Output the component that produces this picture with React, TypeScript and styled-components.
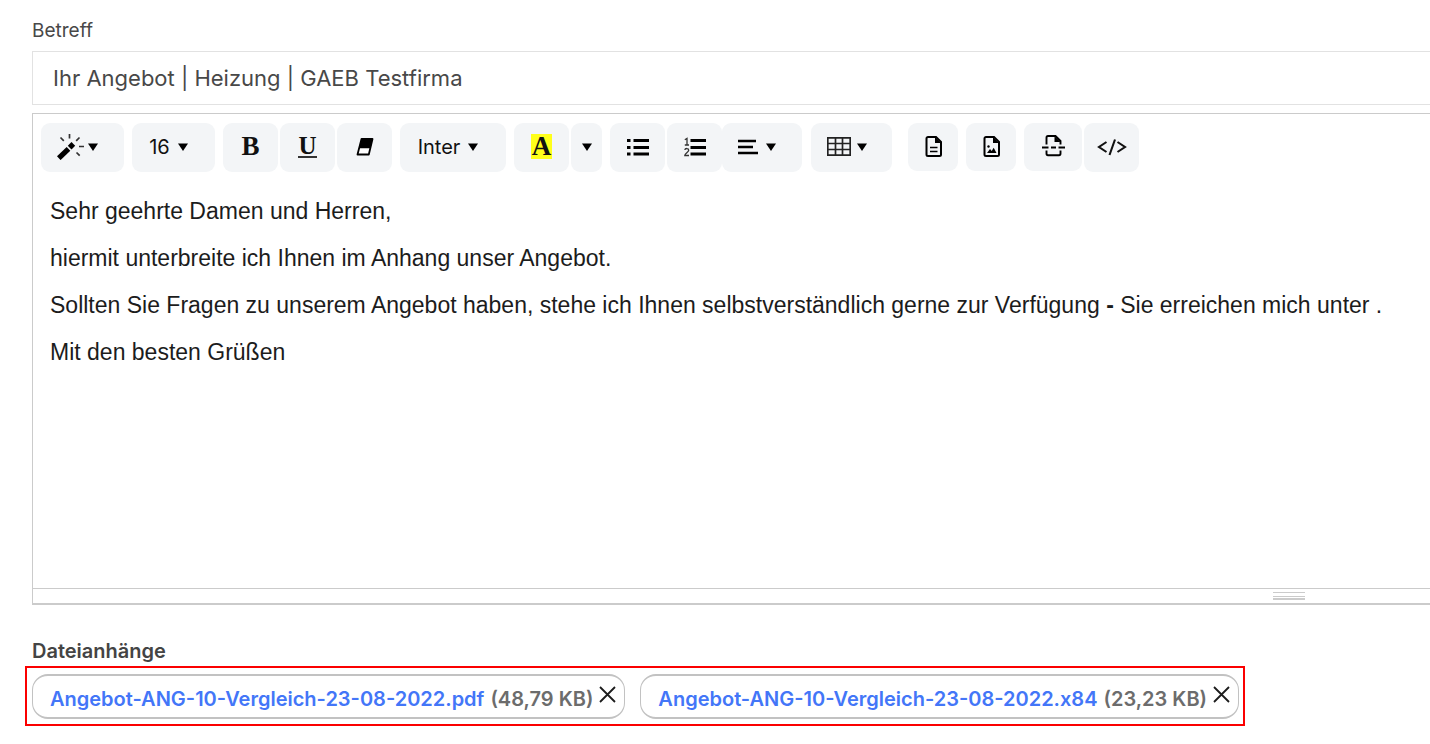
import React from 'react';
import styled, { createGlobalStyle, css } from 'styled-components';

const GlobalStyle = createGlobalStyle`
  *, *::before, *::after { box-sizing: border-box; }
  body {
    margin: 0;
    background: #fff;
    color: #484848;
    font-family: Inter, "Liberation Sans", sans-serif;
    overflow-x: hidden;
  }
`;

const Form = styled.form`
  display: flex;
  flex-direction: column;
  padding: 19px 0 18px 25px;
`;

const Field = styled.div`
  display: flex;
  flex-direction: column;
  padding-left: 7px;
`;

const SubjectLabel = styled.label`
  font-size: 19px;
  font-weight: 400;
  line-height: 24px;
  margin-bottom: 8px;
`;

const SubjectInput = styled.input`
  width: 100%;
  height: 54px;
  padding: 0 20px;
  border: 1px solid #e2e2e2;
  border-right: 0;
  border-radius: 0;
  background: #fff;
  color: #484848;
  font-family: inherit;
  font-size: 22px;
  font-weight: 400;
  outline: none;
`;

const Editor = styled.section`
  display: flex;
  flex-direction: column;
  margin: 8px 0 0 7px;
  border: 1px solid #cbcbcb;
  border-width: 1px 0 2px 1px;
`;

const Toolbar = styled.div`
  display: flex;
  flex-wrap: wrap;
  align-items: flex-start;
  gap: 8px;
  padding: 9px 8px 0;
`;

const Group = styled.div<{ $gap?: number; $before?: number }>`
  display: flex;
  gap: ${({ $gap = 2 }) => $gap}px;
  margin-left: ${({ $before = 0 }) => $before}px;
`;

const ToolButton = styled.button<{ $width?: number; $short?: boolean; $menu?: boolean; $gap?: number }>`
  display: inline-flex;
  align-items: center;
  justify-content: center;
  gap: ${({ $gap = 8 }) => $gap}px;
  width: ${({ $width = 55 }) => $width}px;
  height: ${({ $short }) => ($short ? 48 : 49)}px;
  padding: 0 ${({ $menu }) => ($menu ? 10 : 0)}px 2px 0;
  border: 0;
  border-radius: 9px;
  background: #f3f5f7;
  color: #111;
  font-family: inherit;
  font-size: 20px;
  font-weight: 400;
  line-height: 24px;
  cursor: pointer;
`;

const Glyph = styled.span<{ $underline?: boolean; $marked?: boolean }>`
  font-family: "Liberation Serif", serif;
  font-size: 27px;
  font-weight: 700;
  line-height: 25px;
  ${({ $underline }) => $underline && css`
    font-size: 25px;
    border-bottom: 2px solid #333;
    line-height: 20px;
  `}
  ${({ $marked }) => $marked && css`
    width: 21px;
    background: #ffff1a;
    text-align: center;
  `}
`;

const Body = styled.div`
  min-height: 416px;
  padding: 25px 17px 0;
  color: #1c1c1c;
  font-family: "Liberation Sans", Arial, sans-serif;
  font-size: 23px;
  line-height: 28px;
  outline: none;

  p { margin: 0 0 19px; }
`;

const StatusBar = styled.div`
  display: flex;
  justify-content: flex-end;
  height: 15px;
  padding: 3px 125px 0 0;
  border-top: 1px solid #cbcbcb;
`;

const Grip = styled.span`
  width: 32px;
  height: 8px;
  border: 1px solid #cbcbcb;
  border-width: 1px 0 2px;
  cursor: ns-resize;

  &::after {
    content: "";
    display: block;
    height: 4px;
    border-bottom: 1px solid #cbcbcb;
  }
`;

const AttachmentsTitle = styled.h2`
  margin: 33px 0 2px 7px;
  color: #444;
  font-size: 20px;
  font-weight: 600;
  line-height: 26px;
`;

const AttachmentList = styled.ul`
  display: flex;
  flex-wrap: wrap;
  align-self: flex-start;
  gap: 15px;
  margin: 0;
  padding: 6px 4px 5px 5px;
  border: 2px solid #fb0000;
  list-style: none;
`;

const Attachment = styled.li`
  display: flex;
  align-items: center;
  gap: 6px;
  height: 45px;
  padding: 4px 8px 0 17px;
  border: 1px solid #c2c2c2;
  border-width: 2px 1px;
  border-radius: 16px;
  font-size: 20px;
  font-weight: 600;
  line-height: 28px;
  white-space: nowrap;
`;

const FileLink = styled.a`
  color: #4376f8;
  text-decoration: none;
`;

const FileSize = styled.span`
  color: #6c6c6c;
`;

const RemoveButton = styled.button`
  display: flex;
  padding: 0;
  margin-bottom: 8px;
  border: 0;
  background: none;
  cursor: pointer;
`;

const Caret = () => (
  <svg width="10" height="8" viewBox="0 0 10 8" aria-hidden="true">
    <path d="M0 .5h10L5 8z" fill="#000" />
  </svg>
);

const WandIcon = () => (
  <svg width="27" height="26" viewBox="0 0 27 26" aria-hidden="true">
    <path d="M1.800 24.200 11.500 14.800" stroke="#000" strokeWidth="5.200" />
    <path d="m14.500 8 3.700 3.700-3.700 3.700-3.700-3.700z" fill="#000" />
    <path d="M12.500 0v4.500M3.500 3.500l3.300 3.300M22.500 3.500l-3.300 3.300M22 12.500h5M19.500 18.500l3.200 3.200" stroke="#333" strokeWidth="1.700" fill="none" />
  </svg>
);

const EraserIcon = () => (
  <svg width="18" height="18" viewBox="0 0 18 18" aria-hidden="true">
    <path d="M5.500 1h11l-3.700 15.500H1.500z" fill="#fff" stroke="#000" strokeWidth="1.800" strokeLinejoin="round" />
    <path d="M5.500 1h11l-2.200 9.300H3z" fill="#000" />
  </svg>
);

const BulletsIcon = () => (
  <svg width="22" height="18" viewBox="0 0 22 18" aria-hidden="true">
    <path d="M0 2.500h3.500M0 9.500h3.500M0 16h3.500" stroke="#000" strokeWidth="3.200" />
    <path d="M6.500 2.500H22M6.500 9.500H22M6.500 16H22" stroke="#000" strokeWidth="3" />
  </svg>
);

const NumbersIcon = () => (
  <svg width="22" height="20" viewBox="0 0 22 20" aria-hidden="true">
    <path d="M6.500 3.500H22M6.500 10.500H22M6.500 17H22" stroke="#000" strokeWidth="3" />
    <path d="M.8 2.800 3 1.500V8M.8 8h4.200M.8 13c.3-2 3.900-2 3.900.2C4.700 15 .8 16.500.8 18.500H5" stroke="#333" strokeWidth="1.300" fill="none" />
  </svg>
);

const AlignIcon = () => (
  <svg width="20" height="16" viewBox="0 0 20 16" aria-hidden="true">
    <path d="M0 2h18M0 8h15M0 14h20" stroke="#000" strokeWidth="2.700" />
  </svg>
);

const TableIcon = () => (
  <svg width="24" height="19" viewBox="0 0 24 19" aria-hidden="true">
    <path d="M.8.800h22.400v17.400H.8zM.8 6.500h22.400M.8 12.500h22.400M8.500 1v17M15.500 1v17" stroke="#222" strokeWidth="1.700" fill="none" />
  </svg>
);

const pageOutline = 'M3 1h8l5 5v12.500a1.500 1.500 0 0 1-1.500 1.500H3a1.500 1.500 0 0 1-1.500-1.500v-16A1.500 1.500 0 0 1 3 1z';

const PageIcon = () => (
  <svg width="17" height="21" viewBox="0 0 17 21" aria-hidden="true">
    <path d={pageOutline} fill="none" stroke="#000" strokeWidth="2" />
    <path d="M10 1v6h6z" fill="#000" />
    <path d="M5 11.500h7.500M5 15.500h7.500" stroke="#000" strokeWidth="1.600" />
  </svg>
);

const PictureIcon = () => (
  <svg width="17" height="21" viewBox="0 0 17 21" aria-hidden="true">
    <path d={pageOutline} fill="none" stroke="#000" strokeWidth="2" />
    <path d="M10 1v6h6zM4 17l3-4 1.700 2 2-3.200L13.500 17z" fill="#000" />
    <circle cx="5.500" cy="10.500" r="1.200" fill="#000" />
  </svg>
);

const PageBreakIcon = () => (
  <svg width="23" height="22" viewBox="0 0 23 22" aria-hidden="true">
    <path d="M4.500 9.500V2.700C4.500 1.700 5 1 6 1h7.500l5 5v3.500M4.500 15.500v3c0 1 .5 1.700 1.500 1.700h11c1 0 1.500-.7 1.500-1.700v-3" fill="none" stroke="#000" strokeWidth="1.900" />
    <path d="M12.500 1v6h6z" fill="#000" />
    <path d="M0 12.500h6.500M9 12.500h5M16.500 12.500H23" stroke="#000" strokeWidth="2" />
  </svg>
);

const CodeIcon = () => (
  <svg width="30" height="18" viewBox="0 0 30 18" aria-hidden="true">
    <path d="M9.500 4 2 9l7.500 5M20.500 4 28 9l-7.500 5M18 1.500l-5.500 15.500" fill="none" stroke="#111" strokeWidth="2.100" />
  </svg>
);

const CloseIcon = () => (
  <svg width="17" height="17" viewBox="0 0 17 17" aria-hidden="true">
    <path d="m1 1 15 15M16 1 1 16" stroke="#1c1c1c" strokeWidth="1.800" />
  </svg>
);

interface ToolProps {
  label: string;
  width?: number;
  short?: boolean;
  menu?: boolean;
  gap?: number;
  children: React.ReactNode;
}

const Tool = ({ label, width, short, menu, gap, children }: ToolProps) => (
  <ToolButton type="button" aria-label={label} $width={width} $short={short} $menu={menu} $gap={gap}>
    {children}
    {menu && <Caret />}
  </ToolButton>
);

const attachments = [
  { name: 'Angebot-ANG-10-Vergleich-23-08-2022.pdf', size: '48,79 KB' },
  { name: 'Angebot-ANG-10-Vergleich-23-08-2022.x84', size: '23,23 KB' },
];

export default function App() {
  return (
    <>
      <GlobalStyle />
      <Form>
        <Field>
          <SubjectLabel htmlFor="subject">Betreff</SubjectLabel>
          <SubjectInput id="subject" type="text" defaultValue="Ihr Angebot | Heizung | GAEB Testfirma" />
        </Field>

        <Editor>
          <Toolbar role="toolbar" aria-label="Formatierung">
            <Tool label="Stil" width={83} gap={4} menu><WandIcon /></Tool>
            <Tool label="Schriftgröße" width={83} menu>16</Tool>
            <Group>
              <Tool label="Fett"><Glyph>B</Glyph></Tool>
              <Tool label="Unterstrichen"><Glyph $underline>U</Glyph></Tool>
              <Tool label="Formatierung entfernen"><EraserIcon /></Tool>
            </Group>
            <Tool label="Schriftart" width={106} menu>Inter</Tool>
            <Group>
              <Tool label="Textfarbe"><Glyph $marked>A</Glyph></Tool>
              <Tool label="Weitere Farben" width={31}><Caret /></Tool>
            </Group>
            <Group>
              <Tool label="Aufzählung"><BulletsIcon /></Tool>
              <Tool label="Nummerierung"><NumbersIcon /></Tool>
            </Group>
            <Group $before={-8}>
              <Tool label="Ausrichtung" width={80} menu><AlignIcon /></Tool>
            </Group>
            <Group $before={1}>
              <Tool label="Tabelle" width={81} gap={6} menu><TableIcon /></Tool>
            </Group>
            <Group $gap={8} $before={8}>
              <Tool label="Textbaustein" width={50} short><PageIcon /></Tool>
              <Tool label="Bild" width={50} short><PictureIcon /></Tool>
              <Group>
                <Tool label="Seitenumbruch" width={58} short><PageBreakIcon /></Tool>
                <Tool label="Quelltext"><CodeIcon /></Tool>
              </Group>
            </Group>
          </Toolbar>

          <Body contentEditable suppressContentEditableWarning spellCheck={false} role="textbox" aria-multiline="true" aria-label="Nachricht">
            <p>Sehr geehrte Damen und Herren,</p>
            <p>hiermit unterbreite ich Ihnen im Anhang unser Angebot.</p>
            <p>
              Sollten Sie Fragen zu unserem Angebot haben, stehe ich Ihnen selbstverständlich gerne zur Verfügung <b>-</b> Sie erreichen mich unter .
            </p>
            <p>Mit den besten Grüßen</p>
          </Body>
          <StatusBar><Grip /></StatusBar>
        </Editor>

        <AttachmentsTitle>Dateianhänge</AttachmentsTitle>
        <AttachmentList>
          {attachments.map(({ name, size }) => (
            <Attachment key={name}>
              <FileLink href="#">{name}</FileLink>
              <FileSize>({size})</FileSize>
              <RemoveButton type="button" aria-label={`${name} entfernen`}><CloseIcon /></RemoveButton>
            </Attachment>
          ))}
        </AttachmentList>
      </Form>
    </>
  );
}
